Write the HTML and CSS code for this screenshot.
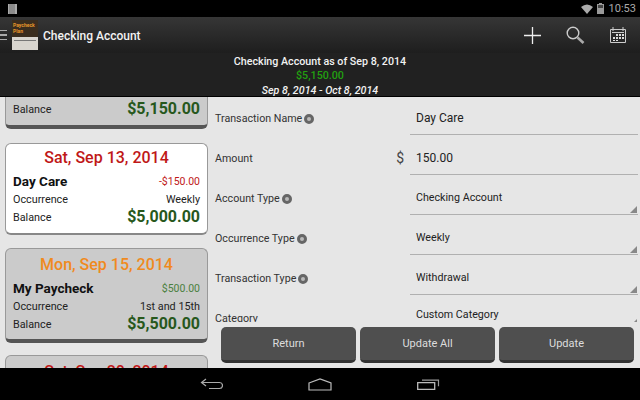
FILE: index.html
```html
<!DOCTYPE html>
<html>
<head>
    <title>Paycheck Plan - Checking Account</title>
    <link rel="stylesheet" href="styles.css">
</head>
<body>
    <div class="status-bar">
        <svg class="notify" width="9" height="10" viewBox="0 0 9 10"><path d="M0 0h9v10H0z" fill="#aaa"/><path d="M2 0v10M4 0v10M6 0v10" stroke="#555" stroke-width=".7"/></svg>
        <div class="status-right">
            <svg width="12" height="10" viewBox="0 0 12 10"><path d="M0 3Q6-2 12 3L6 10z" fill="#aaa"/></svg>
            <svg width="7" height="11" viewBox="0 0 7 11"><path d="M2 0h3v1h2v10H0V1h2z" fill="#999"/><path d="M1 2h5v3H1z" fill="#444"/></svg>
            <span class="clock">10:53</span>
        </div>
    </div>

    <div class="action-bar">
        <div class="hamburger"><i></i><i></i><i></i></div>
        <div class="logo">
            <div class="logo-top">Paycheck<br>Plan</div>
            <div class="logo-bottom"><i></i></div>
        </div>
        <div class="app-title">Checking Account</div>
        <div class="actions">
            <svg width="17" height="17" viewBox="0 0 17 17"><path d="M8.5 0v17M0 8.5h17" stroke="#eee" stroke-width="1.3"/></svg>
            <svg width="19" height="18" viewBox="0 0 19 18"><circle cx="7" cy="7" r="5.8" fill="none" stroke="#ccc" stroke-width="1.4"/><path d="M11.5 11.5l6 5.5" stroke="#aaa" stroke-width="2.6"/></svg>
            <svg width="16" height="16" viewBox="0 0 16 16"><path d="M.5 2.5h15v13H.5z" fill="none" stroke="#ccc"/><path d="M3 0v4M13 0v4" stroke="#ccc"/><path d="M2 5h12v1H2z" fill="#ccc"/><path d="M6 7h2v2H6zM9 7h2v2H9zM12 7h2v2h-2zM3 10h2v2H3zM6 10h2v2H6zM9 10h2v2H9zM12 10h2v2h-2zM3 13h2v1H3zM6 13h2v1H6z" fill="#ddd"/></svg>
        </div>
    </div>

    <div class="summary">
        <div class="summary-title">Checking Account as of Sep 8, 2014</div>
        <div class="summary-amount">$5,150.00</div>
        <div class="summary-range">Sep 8, 2014 - Oct 8, 2014</div>
    </div>

    <div class="content">
        <div class="list">
            <div class="card card-first">
                <div class="card-row"><span class="bal-label">Balance</span><span class="balance">$5,150.00</span></div>
            </div>
            <div class="card card-active">
                <div class="card-date red">Sat, Sep 13, 2014</div>
                <div class="card-row card-row-name"><span class="name">Day Care</span><span class="small red">-$150.00</span></div>
                <div class="card-row"><span>Occurrence</span><span>Weekly</span></div>
                <div class="card-row"><span class="bal-label">Balance</span><span class="balance">$5,000.00</span></div>
            </div>
            <div class="card">
                <div class="card-date orange">Mon, Sep 15, 2014</div>
                <div class="card-row card-row-name"><span class="name">My Paycheck</span><span class="small green">$500.00</span></div>
                <div class="card-row"><span>Occurrence</span><span>1st and 15th</span></div>
                <div class="card-row"><span class="bal-label">Balance</span><span class="balance">$5,500.00</span></div>
            </div>
            <div class="card">
                <div class="card-date red">Sat, Sep 20, 2014</div>
            </div>
        </div>

        <div class="detail">
            <div class="form">
                <div class="row">
                    <div class="label">Transaction Name<span class="help"></span></div>
                    <div class="field input">Day Care</div>
                </div>
                <div class="row">
                    <div class="label">Amount<span class="dollar">$</span></div>
                    <div class="field input">150.00</div>
                </div>
                <div class="row">
                    <div class="label">Account Type<span class="help"></span></div>
                    <div class="field select">Checking Account</div>
                </div>
                <div class="row">
                    <div class="label">Occurrence Type<span class="help"></span></div>
                    <div class="field select">Weekly</div>
                </div>
                <div class="row">
                    <div class="label">Transaction Type<span class="help"></span></div>
                    <div class="field select">Withdrawal</div>
                </div>
                <div class="row">
                    <div class="label">Category</div>
                    <div class="field select field-last">Custom Category</div>
                </div>
            </div>
            <div class="buttons">
                <button>Return</button>
                <button>Update All</button>
                <button>Update</button>
            </div>
        </div>
    </div>

    <div class="nav-bar">
        <svg width="23" height="12" viewBox="0 0 23 12"><path d="M6 1L1.5 4.5 6 8M2 4.5h17.5a2.5 2.5 0 0 1 0 6H9" fill="none" stroke="#aaa" stroke-width="1.2"/></svg>
        <svg width="24" height="13" viewBox="0 0 24 13"><path d="M1 5L12 1l11 4v7H1z" fill="none" stroke="#bbb" stroke-width="1.2"/></svg>
        <svg width="23" height="12" viewBox="0 0 23 12"><path d="M.7 4.7h17v6.6H.7z" fill="none" stroke="#bbb" stroke-width="1.3"/><path d="M5 2.2h16.5v6" fill="none" stroke="#999" stroke-width="1.2"/></svg>
    </div>
</body>
</html>
```
FILE: styles.css
```css
* { box-sizing: border-box; }
html, body { margin: 0; padding: 0; }
body { width: 640px; height: 400px; overflow: hidden; display: flex; flex-direction: column; font-family: Roboto, "Liberation Sans", sans-serif; background: #000; }

.status-bar { height: 17px; flex: none; display: flex; align-items: center; justify-content: space-between; padding: 0 4px 0 8px; background: #000; }
.status-right { display: flex; align-items: center; gap: 4px; }
.clock { color: #aaa; font-size: 11px; margin-left: 1px; }

.action-bar { height: 36px; flex: none; display: flex; align-items: center; background: linear-gradient(#363636, #1e1e1e); }
.hamburger { width: 12px; display: flex; flex-direction: column; gap: 3px; }
.hamburger i { display: block; width: 7px; height: 1.5px; background: #aaa; }
.logo { width: 26px; height: 30px; display: flex; flex-direction: column; }
.logo-top { height: 17px; background: #3a2d1e; color: #e8962a; font-size: 5px; font-weight: 700; line-height: 6px; padding: 2px 0 0 1px; white-space: nowrap; }
.logo-bottom { height: 13px; background: #d8d5cf; padding-top: 3px; }
.logo-bottom i { display: block; height: 1px; margin: 0 2px; background: #777; }
.app-title { margin-left: 5px; padding-top: 1px; color: #f2f2f2; font-size: 12px; font-weight: 500; }
.actions { margin-left: auto; display: flex; align-items: center; gap: 25px; padding-right: 14px; }

.summary { height: 44px; flex: none; background: #212121; border-bottom: 1px solid #000; text-align: center; color: #f2f2f2; font-size: 10.7px; line-height: 14.5px; padding-top: 1.5px; font-weight: 500; }
.summary-amount { color: #22a010; }
.summary-range { font-style: italic; }

.content { flex: 1; min-height: 0; display: flex; background: #e6e6e6; }

.list { width: 209px; flex: none; overflow: hidden; padding: 0 1px 0 5px; }
.card { height: 95px; margin-bottom: 12px; padding: 2px 7px 0; background: #cbcbcb; border: 1px solid #999; border-bottom: 4px solid #555; border-radius: 6px; color: #222; font-size: 10.8px; }
.card-first { height: 32px; margin-bottom: 14px; padding-top: 3px; border-top: none; border-radius: 0 0 6px 6px; }
.card-active { height: 92px; margin-bottom: 13px; padding-top: 0; background: #fff; border-bottom: 2px solid #888; }
.card-date { height: 28px; line-height: 28px; text-align: center; font-size: 16px; font-weight: 500; }
.card-row { height: 17px; display: flex; align-items: center; justify-content: space-between; }
.card-row-name { height: 18px; margin-bottom: 1px; }
.bal-label { padding-top: 2px; }
.name { font-size: 13.5px; font-weight: 700; color: #111; }
.small { font-size: 10.5px; }
.balance { font-size: 16px; font-weight: 700; color: #27581c; }
.red { color: #c01818; }
.orange { color: #f08a1e; }
.green { color: #4a8040; }

.detail { flex: 1; min-width: 0; display: flex; flex-direction: column; }
.form { flex: 1; min-height: 0; overflow: hidden; padding-right: 2px; }
.row { height: 40px; display: flex; }
.label { width: 201px; height: 28px; flex: none; padding: 14px 0 0 6px; color: #333; font-size: 10.7px; display: flex; align-items: center; }
.dollar { margin-left: auto; padding-right: 6px; font-size: 14px; color: #444; }
.help { width: 10px; height: 10px; margin: 1px 0 0 2px; border-radius: 50%; background: #bbb; border: 3px solid #666; }
.field { flex: 1; height: 38px; padding: 14px 0 0 6px; color: #222; border-bottom: 1px solid #b0b0b0; position: relative; }
.input { font-size: 12px; }
.select { font-size: 10.7px; }
.select::after { content: ""; position: absolute; right: 1px; bottom: 1px; border-style: solid; border-width: 0 0 7px 7px; border-color: transparent transparent #888 transparent; }
.field-last { height: 31px; padding-top: 11px; }

.buttons { flex: none; display: flex; gap: 4px; padding: 5px 6px 5px 12px; }
.buttons button { flex: 1; height: 36px; padding: 0; background: #4f4f4f; color: #ddd; font-family: Roboto, "Liberation Sans", sans-serif; font-size: 11px; border: none; border-bottom: 3px solid #333; border-radius: 5px; }

.nav-bar { height: 32px; flex: none; display: flex; align-items: center; justify-content: center; gap: 85px; padding-right: 1px; background: #000; }
```
